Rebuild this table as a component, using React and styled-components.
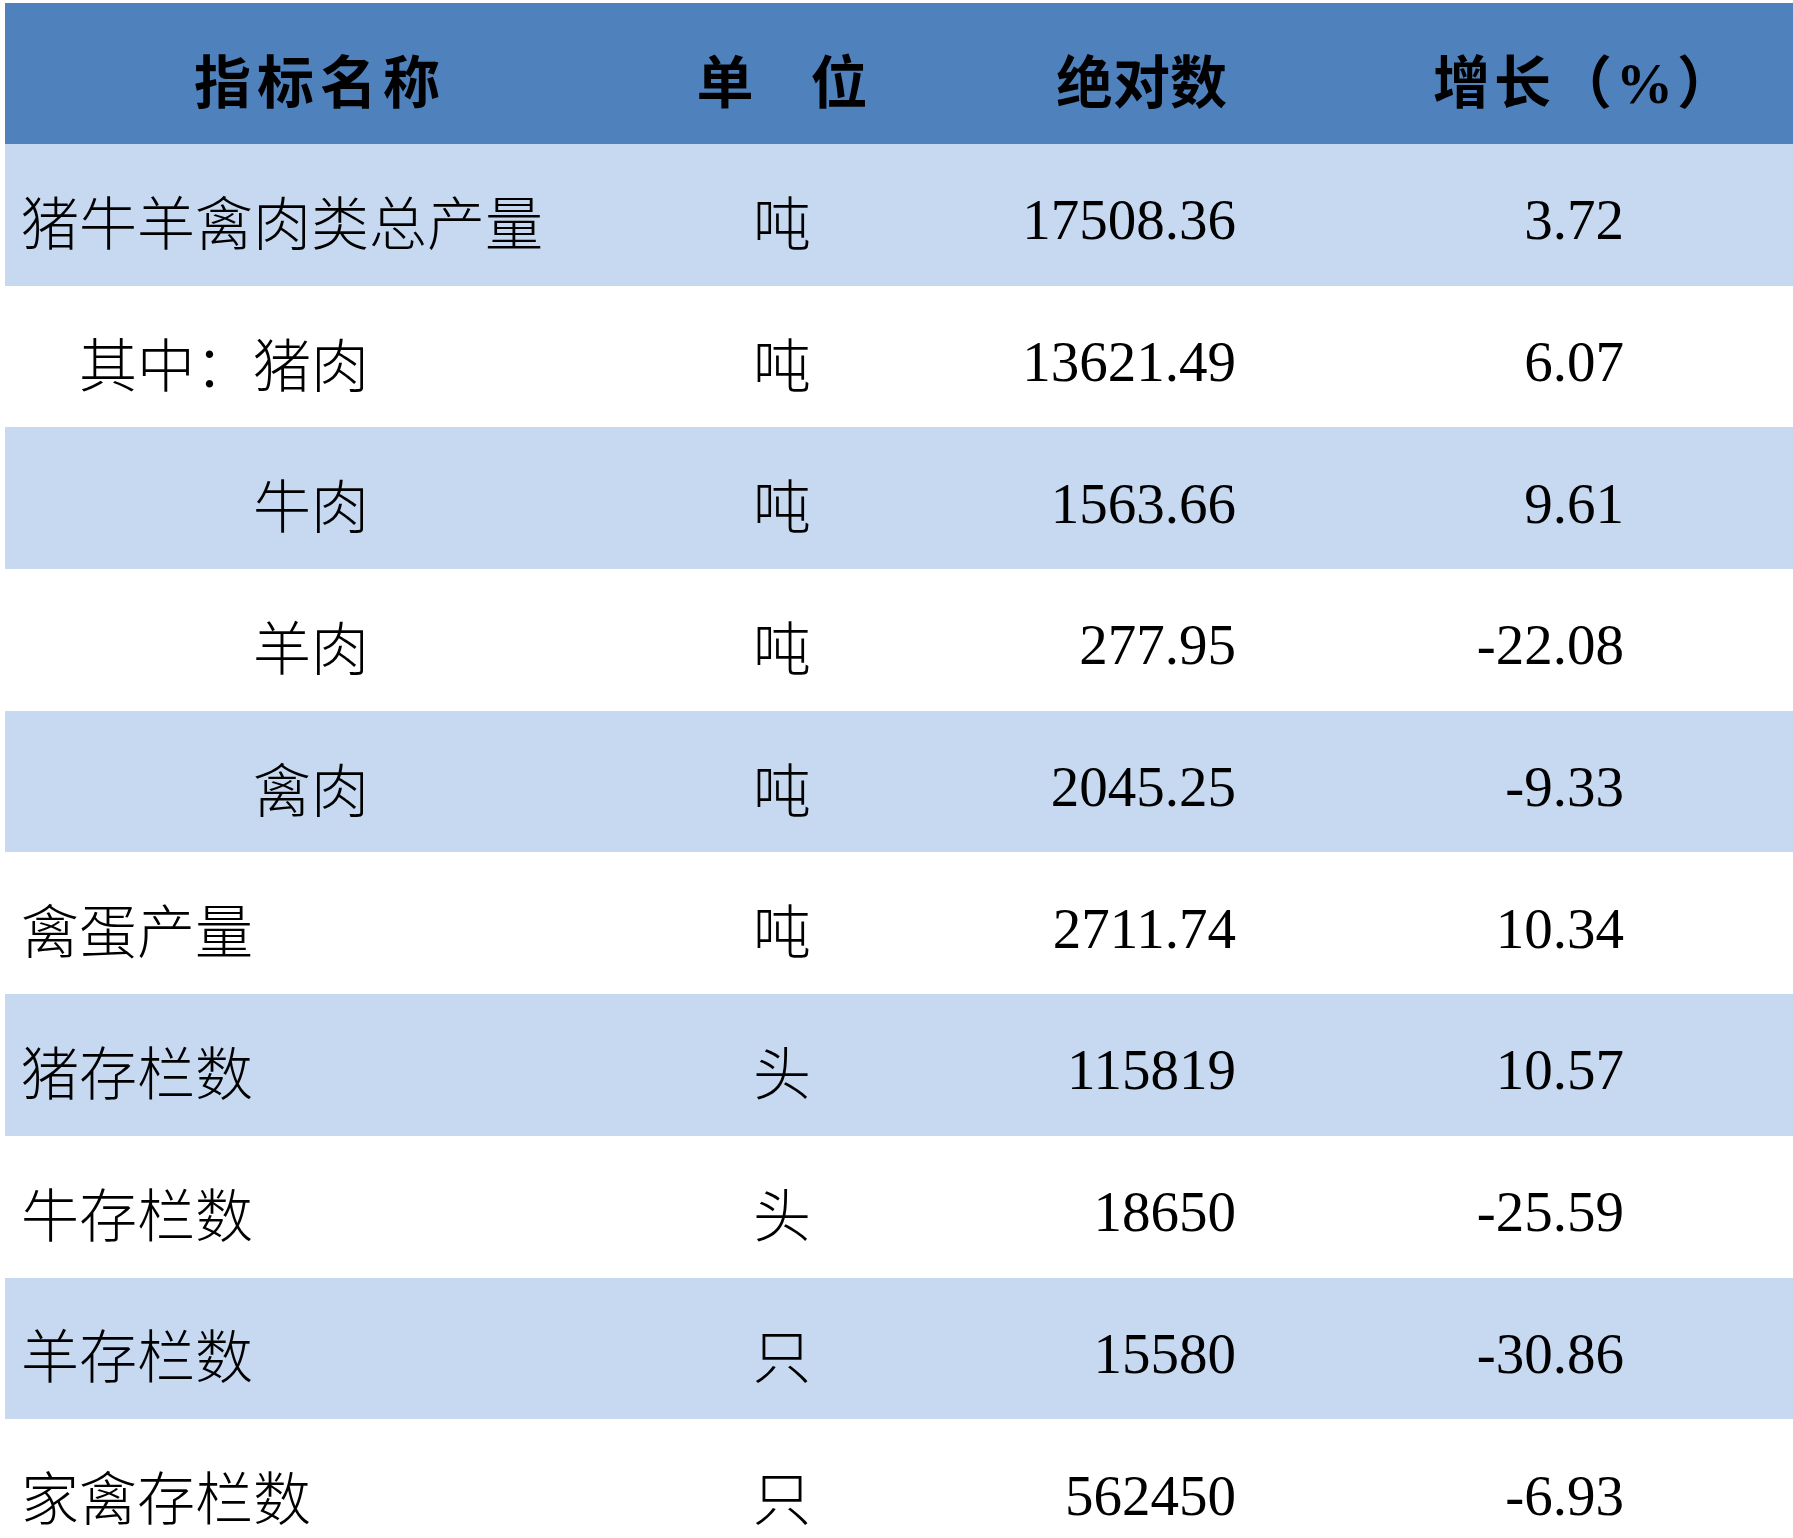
import styled, { createGlobalStyle } from "styled-components";

const GlobalStyle = createGlobalStyle`
  html, body {
    margin: 0;
    padding: 0;
    overflow: hidden;
    background: #ffffff;
  }
  body {
    padding: 3px 0 0 5px;
    font-family: "Liberation Serif", "Noto Sans CJK SC", serif;
    color: #000000;
  }
`;

const rows = [
  { name: "猪牛羊禽肉类总产量", level: 0, unit: "吨", value: "17508.36", growth: "3.72" },
  { name: "其中：猪肉", level: 1, unit: "吨", value: "13621.49", growth: "6.07" },
  { name: "牛肉", level: 2, unit: "吨", value: "1563.66", growth: "9.61" },
  { name: "羊肉", level: 2, unit: "吨", value: "277.95", growth: "-22.08" },
  { name: "禽肉", level: 2, unit: "吨", value: "2045.25", growth: "-9.33" },
  { name: "禽蛋产量", level: 0, unit: "吨", value: "2711.74", growth: "10.34" },
  { name: "猪存栏数", level: 0, unit: "头", value: "115819", growth: "10.57" },
  { name: "牛存栏数", level: 0, unit: "头", value: "18650", growth: "-25.59" },
  { name: "羊存栏数", level: 0, unit: "只", value: "15580", growth: "-30.86" },
  { name: "家禽存栏数", level: 0, unit: "只", value: "562450", growth: "-6.93" },
];

const indents = [16, 74, 248];

function App() {
  return (
    <>
      <GlobalStyle />
      <Table>
        <HeaderRow>
          <HeaderCell $align="left" $pad="0 0 0 189px" $spacing="6px">
            指标名称
          </HeaderCell>
          <HeaderCell $align="center">单　位</HeaderCell>
          <HeaderCell $align="right" $pad="0 33px 0 0">
            绝对数
          </HeaderCell>
          <HeaderCell $align="left" $pad="0 0 0 173px" $spacing="4px">
            增长（%）
          </HeaderCell>
        </HeaderRow>

        {rows.map((row, i) => (
          <DataRow key={row.name} $shaded={i % 2 === 0}>
            <NameCell $indent={indents[row.level]}>{row.name}</NameCell>
            <UnitCell>{row.unit}</UnitCell>
            <NumberCell $right="24px">{row.value}</NumberCell>
            <NumberCell $right="181px">{row.growth}</NumberCell>
          </DataRow>
        ))}
      </Table>
    </>
  );
}

const Table = styled.div`
  width: 1800px;
  display: flex;
  flex-direction: column;
`;

const columns = "555px 444px 256px 545px";

const HeaderRow = styled.div`
  display: grid;
  grid-template-columns: ${columns};
  height: 141px;
  background: #4f81bd;
`;

const HeaderCell = styled.div`
  display: flex;
  align-items: center;
  justify-content: ${(p) =>
    p.$align === "left" ? "flex-start" : p.$align === "right" ? "flex-end" : "center"};
  padding: ${(p) => p.$pad || "0"};
  padding-top: 8px;
  font-size: 57px;
  font-weight: 700;
  letter-spacing: ${(p) => p.$spacing || "0"};
  white-space: nowrap;
`;

const DataRow = styled.div`
  display: grid;
  grid-template-columns: ${columns};
  height: 141.7px;
  background: ${(p) => (p.$shaded ? "#c6d9f0" : "#ffffff")};
`;

const Cell = styled.div`
  display: flex;
  align-items: center;
  padding-top: 10px;
  white-space: nowrap;
`;

const NameCell = styled(Cell)`
  padding-left: ${(p) => p.$indent}px;
  font-size: 58px;
  font-weight: 300;
`;

const UnitCell = styled(Cell)`
  justify-content: center;
  font-size: 58px;
  font-weight: 300;
`;

const NumberCell = styled(Cell)`
  justify-content: flex-end;
  padding-right: ${(p) => p.$right};
  font-size: 57px;
`;

export default App;
